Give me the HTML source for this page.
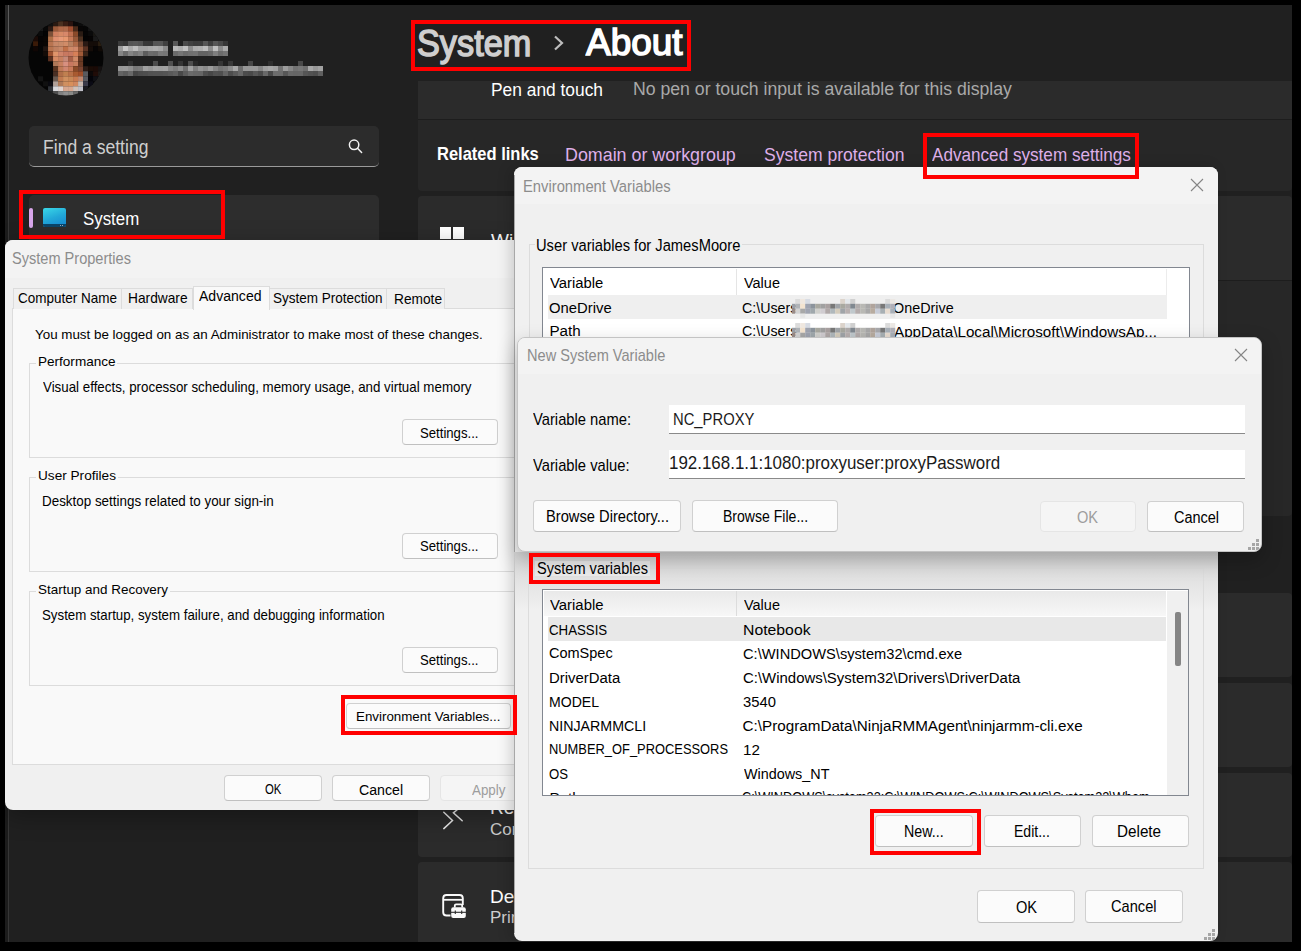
<!DOCTYPE html>
<html><head><meta charset="utf-8">
<style>
*{margin:0;padding:0;box-sizing:border-box}
html,body{width:1301px;height:951px;overflow:hidden;background:#000;font-family:"Liberation Sans",sans-serif}
.a{position:absolute}
.t{position:absolute;white-space:nowrap;line-height:1;transform-origin:0 0}
.clip{position:absolute;overflow:hidden}
</style></head><body>

<div class="a" style="left:5px;top:5px;width:1287px;height:937px;background:#202020"></div>
<div class="a" style="left:5px;top:5px;width:3px;height:937px;background:#1c1c1c"></div>
<div class="a" style="left:8px;top:5px;width:1px;height:937px;background:#363636"></div>
<div class="a" style="left:5px;top:5px;width:3px;height:35px;background:#262626"></div>
<div class="a" style="left:8px;top:5px;width:1px;height:35px;background:#5a5a5a"></div>
<div class="a" style="left:418px;top:81px;width:874px;height:38px;background:#2b2b2b"></div>
<div class="a" style="left:418px;top:119px;width:874px;height:1px;background:#1d1d1d"></div>
<div class="a" style="left:418px;top:120px;width:874px;height:71px;background:#272727;border-radius:0 0 4px 4px"></div>
<div class="a" style="left:418px;top:196px;width:874px;height:84px;background:#2b2b2b;border-radius:4px 4px 0 0"></div>
<div class="a" style="left:418px;top:280px;width:874px;height:1px;background:#1d1d1d"></div>
<div class="a" style="left:418px;top:281px;width:874px;height:235px;background:#272727;border-radius:0 0 4px 4px"></div>
<div class="a" style="left:418px;top:593px;width:874px;height:84px;background:#2b2b2b;border-radius:4px"></div>
<div class="a" style="left:418px;top:683px;width:874px;height:84px;background:#2b2b2b;border-radius:4px"></div>
<div class="a" style="left:418px;top:773px;width:874px;height:84px;background:#2b2b2b;border-radius:4px"></div>
<div class="a" style="left:418px;top:862px;width:874px;height:80px;background:#2b2b2b;border-radius:4px 4px 0 0"></div>
<svg class="a" style="left:23px;top:11px" width="85" height="92" viewBox="0 0 85 92"><defs><clipPath id="avc"><circle cx="43" cy="47" r="37.5"/></clipPath></defs><g clip-path="url(#avc)"><rect x="0" y="0" width="85" height="92" fill="#050505"/><rect x="25.05" y="10.26" width="5.05" height="5.05" fill="#111"/><rect x="30.05" y="10.26" width="5.05" height="5.05" fill="#2a1a12"/><rect x="35.05" y="10.26" width="5.05" height="5.05" fill="#4a3020"/><rect x="40.05" y="10.26" width="5.05" height="5.05" fill="#3a1e14"/><rect x="45.05" y="10.26" width="5.05" height="5.05" fill="#2a1410"/><rect x="50.05" y="10.26" width="5.05" height="5.05" fill="#0a0808"/><rect x="55.05" y="10.26" width="5.05" height="5.05" fill="#0c0c0c"/><rect x="60.05" y="10.26" width="5.05" height="5.05" fill="#1a1a1a"/><rect x="15.05" y="15.26" width="5.05" height="5.05" fill="#1a1a1a"/><rect x="20.05" y="15.26" width="5.05" height="5.05" fill="#080808"/><rect x="25.05" y="15.26" width="5.05" height="5.05" fill="#2a1a14"/><rect x="30.05" y="15.26" width="5.05" height="5.05" fill="#9a5a3a"/><rect x="35.05" y="15.26" width="5.05" height="5.05" fill="#b06848"/><rect x="40.05" y="15.26" width="5.05" height="5.05" fill="#b06a4a"/><rect x="45.05" y="15.26" width="5.05" height="5.05" fill="#a04e30"/><rect x="50.05" y="15.26" width="5.05" height="5.05" fill="#4a2a1a"/><rect x="55.05" y="15.26" width="5.05" height="5.05" fill="#080606"/><rect x="60.05" y="15.26" width="5.05" height="5.05" fill="#060606"/><rect x="65.05" y="15.26" width="5.05" height="5.05" fill="#141414"/><rect x="15.05" y="20.26" width="5.05" height="5.05" fill="#0a0a0a"/><rect x="20.05" y="20.26" width="5.05" height="5.05" fill="#040404"/><rect x="25.05" y="20.26" width="5.05" height="5.05" fill="#7a5038"/><rect x="30.05" y="20.26" width="5.05" height="5.05" fill="#d08060"/><rect x="35.05" y="20.26" width="5.05" height="5.05" fill="#d88a66"/><rect x="40.05" y="20.26" width="5.05" height="5.05" fill="#d8886a"/><rect x="45.05" y="20.26" width="5.05" height="5.05" fill="#c07050"/><rect x="50.05" y="20.26" width="5.05" height="5.05" fill="#8a4a2a"/><rect x="55.05" y="20.26" width="5.05" height="5.05" fill="#2a1c14"/><rect x="60.05" y="20.26" width="5.05" height="5.05" fill="#050505"/><rect x="65.05" y="20.26" width="5.05" height="5.05" fill="#0a0a0a"/><rect x="70.05" y="20.26" width="5.05" height="5.05" fill="#1a1814"/><rect x="10.05" y="25.26" width="5.05" height="5.05" fill="#1a0a06"/><rect x="15.05" y="25.26" width="5.05" height="5.05" fill="#060404"/><rect x="20.05" y="25.26" width="5.05" height="5.05" fill="#0a0604"/><rect x="25.05" y="25.26" width="5.05" height="5.05" fill="#b07048"/><rect x="30.05" y="25.26" width="5.05" height="5.05" fill="#e09070"/><rect x="35.05" y="25.26" width="5.05" height="5.05" fill="#e89a78"/><rect x="40.05" y="25.26" width="5.05" height="5.05" fill="#e89870"/><rect x="45.05" y="25.26" width="5.05" height="5.05" fill="#c87a58"/><rect x="50.05" y="25.26" width="5.05" height="5.05" fill="#9a5a3a"/><rect x="55.05" y="25.26" width="5.05" height="5.05" fill="#4a3020"/><rect x="60.05" y="25.26" width="5.05" height="5.05" fill="#040404"/><rect x="65.05" y="25.26" width="5.05" height="5.05" fill="#060404"/><rect x="70.05" y="25.26" width="5.05" height="5.05" fill="#1a1a1a"/><rect x="10.05" y="30.26" width="5.05" height="5.05" fill="#3a1a08"/><rect x="15.05" y="30.26" width="5.05" height="5.05" fill="#080404"/><rect x="20.05" y="30.26" width="5.05" height="5.05" fill="#0a0604"/><rect x="25.05" y="30.26" width="5.05" height="5.05" fill="#b87450"/><rect x="30.05" y="30.26" width="5.05" height="5.05" fill="#c88868"/><rect x="35.05" y="30.26" width="5.05" height="5.05" fill="#c88a68"/><rect x="40.05" y="30.26" width="5.05" height="5.05" fill="#d08c68"/><rect x="45.05" y="30.26" width="5.05" height="5.05" fill="#b88060"/><rect x="50.05" y="30.26" width="5.05" height="5.05" fill="#b06a48"/><rect x="55.05" y="30.26" width="5.05" height="5.05" fill="#7a4a32"/><rect x="60.05" y="30.26" width="5.05" height="5.05" fill="#2a1a14"/><rect x="65.05" y="30.26" width="5.05" height="5.05" fill="#140c08"/><rect x="70.05" y="30.26" width="5.05" height="5.05" fill="#140c08"/><rect x="75.05" y="30.26" width="5.05" height="5.05" fill="#2a1e10"/><rect x="10.05" y="35.26" width="5.05" height="5.05" fill="#100604"/><rect x="20.05" y="35.26" width="5.05" height="5.05" fill="#201410"/><rect x="25.05" y="35.26" width="5.05" height="5.05" fill="#b87450"/><rect x="30.05" y="35.26" width="5.05" height="5.05" fill="#c08060"/><rect x="35.05" y="35.26" width="5.05" height="5.05" fill="#c88868"/><rect x="40.05" y="35.26" width="5.05" height="5.05" fill="#c07048"/><rect x="45.05" y="35.26" width="5.05" height="5.05" fill="#d08a68"/><rect x="50.05" y="35.26" width="5.05" height="5.05" fill="#d0886a"/><rect x="55.05" y="35.26" width="5.05" height="5.05" fill="#9a5a3a"/><rect x="60.05" y="35.26" width="5.05" height="5.05" fill="#5a3222"/><rect x="65.05" y="35.26" width="5.05" height="5.05" fill="#140c08"/><rect x="70.05" y="35.26" width="5.05" height="5.05" fill="#060404"/><rect x="75.05" y="35.26" width="5.05" height="5.05" fill="#100a06"/><rect x="20.05" y="40.26" width="5.05" height="5.05" fill="#140c08"/><rect x="25.05" y="40.26" width="5.05" height="5.05" fill="#9a5030"/><rect x="30.05" y="40.26" width="5.05" height="5.05" fill="#e0946a"/><rect x="35.05" y="40.26" width="5.05" height="5.05" fill="#d0846a"/><rect x="40.05" y="40.26" width="5.05" height="5.05" fill="#c87860"/><rect x="45.05" y="40.26" width="5.05" height="5.05" fill="#c87860"/><rect x="50.05" y="40.26" width="5.05" height="5.05" fill="#d88058"/><rect x="55.05" y="40.26" width="5.05" height="5.05" fill="#a05a38"/><rect x="60.05" y="40.26" width="5.05" height="5.05" fill="#3a2418"/><rect x="25.05" y="45.26" width="5.05" height="5.05" fill="#5a3020"/><rect x="30.05" y="45.26" width="5.05" height="5.05" fill="#d88a64"/><rect x="35.05" y="45.26" width="5.05" height="5.05" fill="#c88060"/><rect x="40.05" y="45.26" width="5.05" height="5.05" fill="#c88a78"/><rect x="45.05" y="45.26" width="5.05" height="5.05" fill="#a86048"/><rect x="50.05" y="45.26" width="5.05" height="5.05" fill="#d08a68"/><rect x="55.05" y="45.26" width="5.05" height="5.05" fill="#6a3a24"/><rect x="30.05" y="50.26" width="5.05" height="5.05" fill="#b07858"/><rect x="35.05" y="50.26" width="5.05" height="5.05" fill="#c88060"/><rect x="40.05" y="50.26" width="5.05" height="5.05" fill="#d89080"/><rect x="45.05" y="50.26" width="5.05" height="5.05" fill="#c87860"/><rect x="50.05" y="50.26" width="5.05" height="5.05" fill="#c88060"/><rect x="55.05" y="50.26" width="5.05" height="5.05" fill="#6a3a24"/><rect x="30.05" y="55.26" width="5.05" height="5.05" fill="#5a3420"/><rect x="35.05" y="55.26" width="5.05" height="5.05" fill="#c07a58"/><rect x="40.05" y="55.26" width="5.05" height="5.05" fill="#d08670"/><rect x="45.05" y="55.26" width="5.05" height="5.05" fill="#c87a5a"/><rect x="50.05" y="55.26" width="5.05" height="5.05" fill="#8a4a28"/><rect x="55.05" y="55.26" width="5.05" height="5.05" fill="#7a4430"/><rect x="60.05" y="55.26" width="5.05" height="5.05" fill="#2a1a14"/><rect x="65.05" y="55.26" width="5.05" height="5.05" fill="#1a0c06"/><rect x="70.05" y="55.26" width="5.05" height="5.05" fill="#1a0a06"/><rect x="75.05" y="55.26" width="5.05" height="5.05" fill="#141010"/><rect x="30.05" y="60.26" width="5.05" height="5.05" fill="#4a3024"/><rect x="35.05" y="60.26" width="5.05" height="5.05" fill="#b06e48"/><rect x="40.05" y="60.26" width="5.05" height="5.05" fill="#c08050"/><rect x="45.05" y="60.26" width="5.05" height="5.05" fill="#b87048"/><rect x="50.05" y="60.26" width="5.05" height="5.05" fill="#a85a30"/><rect x="55.05" y="60.26" width="5.05" height="5.05" fill="#a04e2a"/><rect x="60.05" y="60.26" width="5.05" height="5.05" fill="#5a5a5e"/><rect x="65.05" y="60.26" width="5.05" height="5.05" fill="#0c0808"/><rect x="70.05" y="60.26" width="5.05" height="5.05" fill="#200c08"/><rect x="75.05" y="60.26" width="5.05" height="5.05" fill="#1e1a18"/><rect x="15.05" y="65.26" width="5.05" height="5.05" fill="#141414"/><rect x="30.05" y="65.26" width="5.05" height="5.05" fill="#6a5a50"/><rect x="35.05" y="65.26" width="5.05" height="5.05" fill="#c07a50"/><rect x="40.05" y="65.26" width="5.05" height="5.05" fill="#d09060"/><rect x="45.05" y="65.26" width="5.05" height="5.05" fill="#c88858"/><rect x="50.05" y="65.26" width="5.05" height="5.05" fill="#c87a50"/><rect x="55.05" y="65.26" width="5.05" height="5.05" fill="#c08870"/><rect x="60.05" y="65.26" width="5.05" height="5.05" fill="#5a5a60"/><rect x="65.05" y="65.26" width="5.05" height="5.05" fill="#04040a"/><rect x="70.05" y="65.26" width="5.05" height="5.05" fill="#101014"/><rect x="20.05" y="70.26" width="5.05" height="5.05" fill="#101010"/><rect x="25.05" y="70.26" width="5.05" height="5.05" fill="#0a0a10"/><rect x="30.05" y="70.26" width="5.05" height="5.05" fill="#b0a098"/><rect x="35.05" y="70.26" width="5.05" height="5.05" fill="#b07a58"/><rect x="40.05" y="70.26" width="5.05" height="5.05" fill="#d09060"/><rect x="45.05" y="70.26" width="5.05" height="5.05" fill="#d8905c"/><rect x="50.05" y="70.26" width="5.05" height="5.05" fill="#d08860"/><rect x="55.05" y="70.26" width="5.05" height="5.05" fill="#c8b8b0"/><rect x="60.05" y="70.26" width="5.05" height="5.05" fill="#3a3a4a"/><rect x="65.05" y="70.26" width="5.05" height="5.05" fill="#0a0a14"/><rect x="25.05" y="75.26" width="5.05" height="5.05" fill="#303338"/><rect x="30.05" y="75.26" width="5.05" height="5.05" fill="#d8d8dc"/><rect x="35.05" y="75.26" width="5.05" height="5.05" fill="#e0d4d0"/><rect x="40.05" y="75.26" width="5.05" height="5.05" fill="#d8a890"/><rect x="45.05" y="75.26" width="5.05" height="5.05" fill="#d8a890"/><rect x="50.05" y="75.26" width="5.05" height="5.05" fill="#d0c0b8"/><rect x="55.05" y="75.26" width="5.05" height="5.05" fill="#c0c0c8"/><rect x="60.05" y="75.26" width="5.05" height="5.05" fill="#1a1a20"/><rect x="25.05" y="80.26" width="5.05" height="5.05" fill="#2a2a2a"/><rect x="30.05" y="80.26" width="5.05" height="5.05" fill="#505050"/><rect x="35.05" y="80.26" width="5.05" height="5.05" fill="#808080"/><rect x="40.05" y="80.26" width="5.05" height="5.05" fill="#909090"/><rect x="45.05" y="80.26" width="5.05" height="5.05" fill="#8a8a88"/><rect x="50.05" y="80.26" width="5.05" height="5.05" fill="#6a6a6a"/><rect x="55.05" y="80.26" width="5.05" height="5.05" fill="#303030"/></g></svg>
<svg class="a" style="left:118px;top:41px" width="111" height="16"><rect x="0" y="0" width="5" height="5" fill="rgb(59,59,59)"/><rect x="5" y="0" width="5" height="5" fill="rgb(53,53,53)"/><rect x="10" y="0" width="5" height="5" fill="rgb(84,84,84)"/><rect x="15" y="0" width="5" height="5" fill="rgb(87,87,87)"/><rect x="20" y="0" width="5" height="5" fill="rgb(82,82,82)"/><rect x="25" y="0" width="5" height="5" fill="rgb(55,55,55)"/><rect x="30" y="0" width="5" height="5" fill="rgb(54,54,54)"/><rect x="35" y="0" width="5" height="5" fill="rgb(85,85,85)"/><rect x="40" y="0" width="5" height="5" fill="rgb(86,86,86)"/><rect x="45" y="0" width="5" height="5" fill="rgb(64,64,64)"/><rect x="55" y="0" width="5" height="5" fill="rgb(87,87,87)"/><rect x="65" y="0" width="5" height="5" fill="rgb(75,75,75)"/><rect x="70" y="0" width="5" height="5" fill="rgb(64,64,64)"/><rect x="75" y="0" width="5" height="5" fill="rgb(58,58,58)"/><rect x="80" y="0" width="5" height="5" fill="rgb(59,59,59)"/><rect x="85" y="0" width="5" height="5" fill="rgb(86,86,86)"/><rect x="90" y="0" width="5" height="5" fill="rgb(61,61,61)"/><rect x="95" y="0" width="5" height="5" fill="rgb(86,86,86)"/><rect x="100" y="0" width="5" height="5" fill="rgb(73,73,73)"/><rect x="105" y="0" width="5" height="5" fill="rgb(54,54,54)"/><rect x="0" y="5" width="5" height="5" fill="rgb(156,156,156)"/><rect x="5" y="5" width="5" height="5" fill="rgb(198,198,198)"/><rect x="10" y="5" width="5" height="5" fill="rgb(170,170,170)"/><rect x="15" y="5" width="5" height="5" fill="rgb(188,188,188)"/><rect x="20" y="5" width="5" height="5" fill="rgb(161,161,161)"/><rect x="25" y="5" width="5" height="5" fill="rgb(161,161,161)"/><rect x="30" y="5" width="5" height="5" fill="rgb(168,168,168)"/><rect x="35" y="5" width="5" height="5" fill="rgb(173,173,173)"/><rect x="40" y="5" width="5" height="5" fill="rgb(166,166,166)"/><rect x="45" y="5" width="5" height="5" fill="rgb(139,139,139)"/><rect x="55" y="5" width="5" height="5" fill="rgb(183,183,183)"/><rect x="60" y="5" width="5" height="5" fill="rgb(173,173,173)"/><rect x="65" y="5" width="5" height="5" fill="rgb(192,192,192)"/><rect x="70" y="5" width="5" height="5" fill="rgb(139,139,139)"/><rect x="75" y="5" width="5" height="5" fill="rgb(170,170,170)"/><rect x="80" y="5" width="5" height="5" fill="rgb(174,174,174)"/><rect x="85" y="5" width="5" height="5" fill="rgb(188,188,188)"/><rect x="90" y="5" width="5" height="5" fill="rgb(141,141,141)"/><rect x="95" y="5" width="5" height="5" fill="rgb(190,190,190)"/><rect x="100" y="5" width="5" height="5" fill="rgb(138,138,138)"/><rect x="105" y="5" width="5" height="5" fill="rgb(169,169,169)"/><rect x="0" y="10" width="5" height="5" fill="rgb(133,133,133)"/><rect x="5" y="10" width="5" height="5" fill="rgb(108,108,108)"/><rect x="10" y="10" width="5" height="5" fill="rgb(132,132,132)"/><rect x="15" y="10" width="5" height="5" fill="rgb(119,119,119)"/><rect x="20" y="10" width="5" height="5" fill="rgb(129,129,129)"/><rect x="25" y="10" width="5" height="5" fill="rgb(93,93,93)"/><rect x="30" y="10" width="5" height="5" fill="rgb(108,108,108)"/><rect x="35" y="10" width="5" height="5" fill="rgb(105,105,105)"/><rect x="40" y="10" width="5" height="5" fill="rgb(121,121,121)"/><rect x="45" y="10" width="5" height="5" fill="rgb(118,118,118)"/><rect x="55" y="10" width="5" height="5" fill="rgb(107,107,107)"/><rect x="60" y="10" width="5" height="5" fill="rgb(117,117,117)"/><rect x="65" y="10" width="5" height="5" fill="rgb(107,107,107)"/><rect x="70" y="10" width="5" height="5" fill="rgb(112,112,112)"/><rect x="75" y="10" width="5" height="5" fill="rgb(114,114,114)"/><rect x="80" y="10" width="5" height="5" fill="rgb(99,99,99)"/><rect x="85" y="10" width="5" height="5" fill="rgb(99,99,99)"/><rect x="90" y="10" width="5" height="5" fill="rgb(104,104,104)"/><rect x="95" y="10" width="5" height="5" fill="rgb(127,127,127)"/><rect x="100" y="10" width="5" height="5" fill="rgb(108,108,108)"/><rect x="105" y="10" width="5" height="5" fill="rgb(116,116,116)"/></svg>
<svg class="a" style="left:118px;top:61px" width="206" height="16"><rect x="10" y="0" width="5" height="5" fill="rgb(48,48,48)"/><rect x="35" y="0" width="5" height="5" fill="rgb(75,75,75)"/><rect x="50" y="0" width="5" height="5" fill="rgb(80,80,80)"/><rect x="60" y="0" width="5" height="5" fill="rgb(53,53,53)"/><rect x="70" y="0" width="5" height="5" fill="rgb(78,78,78)"/><rect x="75" y="0" width="5" height="5" fill="rgb(40,40,40)"/><rect x="100" y="0" width="5" height="5" fill="rgb(53,53,53)"/><rect x="110" y="0" width="5" height="5" fill="rgb(56,56,56)"/><rect x="130" y="0" width="5" height="5" fill="rgb(71,71,71)"/><rect x="150" y="0" width="5" height="5" fill="rgb(46,46,46)"/><rect x="180" y="0" width="5" height="5" fill="rgb(73,73,73)"/><rect x="0" y="5" width="5" height="5" fill="rgb(151,151,151)"/><rect x="5" y="5" width="5" height="5" fill="rgb(154,154,154)"/><rect x="10" y="5" width="5" height="5" fill="rgb(143,143,143)"/><rect x="15" y="5" width="5" height="5" fill="rgb(120,120,120)"/><rect x="20" y="5" width="5" height="5" fill="rgb(124,124,124)"/><rect x="25" y="5" width="5" height="5" fill="rgb(159,159,159)"/><rect x="30" y="5" width="5" height="5" fill="rgb(150,150,150)"/><rect x="35" y="5" width="5" height="5" fill="rgb(161,161,161)"/><rect x="40" y="5" width="5" height="5" fill="rgb(158,158,158)"/><rect x="45" y="5" width="5" height="5" fill="rgb(161,161,161)"/><rect x="50" y="5" width="5" height="5" fill="rgb(135,135,135)"/><rect x="55" y="5" width="5" height="5" fill="rgb(124,124,124)"/><rect x="60" y="5" width="5" height="5" fill="rgb(141,141,141)"/><rect x="65" y="5" width="5" height="5" fill="rgb(111,111,111)"/><rect x="70" y="5" width="5" height="5" fill="rgb(160,160,160)"/><rect x="75" y="5" width="5" height="5" fill="rgb(126,126,126)"/><rect x="80" y="5" width="5" height="5" fill="rgb(148,148,148)"/><rect x="85" y="5" width="5" height="5" fill="rgb(138,138,138)"/><rect x="90" y="5" width="5" height="5" fill="rgb(156,156,156)"/><rect x="95" y="5" width="5" height="5" fill="rgb(133,133,133)"/><rect x="100" y="5" width="5" height="5" fill="rgb(116,116,116)"/><rect x="105" y="5" width="5" height="5" fill="rgb(122,122,122)"/><rect x="110" y="5" width="5" height="5" fill="rgb(140,140,140)"/><rect x="115" y="5" width="5" height="5" fill="rgb(167,167,167)"/><rect x="120" y="5" width="5" height="5" fill="rgb(110,110,110)"/><rect x="125" y="5" width="5" height="5" fill="rgb(151,151,151)"/><rect x="130" y="5" width="5" height="5" fill="rgb(151,151,151)"/><rect x="135" y="5" width="5" height="5" fill="rgb(152,152,152)"/><rect x="140" y="5" width="5" height="5" fill="rgb(134,134,134)"/><rect x="145" y="5" width="5" height="5" fill="rgb(158,158,158)"/><rect x="150" y="5" width="5" height="5" fill="rgb(166,166,166)"/><rect x="155" y="5" width="5" height="5" fill="rgb(160,160,160)"/><rect x="160" y="5" width="5" height="5" fill="rgb(115,115,115)"/><rect x="165" y="5" width="5" height="5" fill="rgb(156,156,156)"/><rect x="170" y="5" width="5" height="5" fill="rgb(135,135,135)"/><rect x="175" y="5" width="5" height="5" fill="rgb(115,115,115)"/><rect x="180" y="5" width="5" height="5" fill="rgb(120,120,120)"/><rect x="185" y="5" width="5" height="5" fill="rgb(111,111,111)"/><rect x="190" y="5" width="5" height="5" fill="rgb(167,167,167)"/><rect x="195" y="5" width="5" height="5" fill="rgb(151,151,151)"/><rect x="200" y="5" width="5" height="5" fill="rgb(162,162,162)"/><rect x="0" y="10" width="5" height="5" fill="rgb(100,100,100)"/><rect x="5" y="10" width="5" height="5" fill="rgb(92,92,92)"/><rect x="10" y="10" width="5" height="5" fill="rgb(105,105,105)"/><rect x="15" y="10" width="5" height="5" fill="rgb(70,70,70)"/><rect x="20" y="10" width="5" height="5" fill="rgb(76,76,76)"/><rect x="25" y="10" width="5" height="5" fill="rgb(78,78,78)"/><rect x="30" y="10" width="5" height="5" fill="rgb(82,82,82)"/><rect x="35" y="10" width="5" height="5" fill="rgb(83,83,83)"/><rect x="40" y="10" width="5" height="5" fill="rgb(83,83,83)"/><rect x="45" y="10" width="5" height="5" fill="rgb(85,85,85)"/><rect x="50" y="10" width="5" height="5" fill="rgb(90,90,90)"/><rect x="55" y="10" width="5" height="5" fill="rgb(96,96,96)"/><rect x="60" y="10" width="5" height="5" fill="rgb(73,73,73)"/><rect x="65" y="10" width="5" height="5" fill="rgb(92,92,92)"/><rect x="70" y="10" width="5" height="5" fill="rgb(107,107,107)"/><rect x="75" y="10" width="5" height="5" fill="rgb(103,103,103)"/><rect x="80" y="10" width="5" height="5" fill="rgb(102,102,102)"/><rect x="85" y="10" width="5" height="5" fill="rgb(79,79,79)"/><rect x="90" y="10" width="5" height="5" fill="rgb(71,71,71)"/><rect x="95" y="10" width="5" height="5" fill="rgb(81,81,81)"/><rect x="100" y="10" width="5" height="5" fill="rgb(79,79,79)"/><rect x="105" y="10" width="5" height="5" fill="rgb(100,100,100)"/><rect x="110" y="10" width="5" height="5" fill="rgb(77,77,77)"/><rect x="115" y="10" width="5" height="5" fill="rgb(90,90,90)"/><rect x="120" y="10" width="5" height="5" fill="rgb(103,103,103)"/><rect x="125" y="10" width="5" height="5" fill="rgb(76,76,76)"/><rect x="130" y="10" width="5" height="5" fill="rgb(73,73,73)"/><rect x="135" y="10" width="5" height="5" fill="rgb(87,87,87)"/><rect x="140" y="10" width="5" height="5" fill="rgb(76,76,76)"/><rect x="145" y="10" width="5" height="5" fill="rgb(105,105,105)"/><rect x="150" y="10" width="5" height="5" fill="rgb(74,74,74)"/><rect x="155" y="10" width="5" height="5" fill="rgb(109,109,109)"/><rect x="160" y="10" width="5" height="5" fill="rgb(108,108,108)"/><rect x="165" y="10" width="5" height="5" fill="rgb(87,87,87)"/><rect x="170" y="10" width="5" height="5" fill="rgb(104,104,104)"/><rect x="175" y="10" width="5" height="5" fill="rgb(102,102,102)"/><rect x="180" y="10" width="5" height="5" fill="rgb(103,103,103)"/><rect x="185" y="10" width="5" height="5" fill="rgb(86,86,86)"/><rect x="190" y="10" width="5" height="5" fill="rgb(82,82,82)"/><rect x="195" y="10" width="5" height="5" fill="rgb(78,78,78)"/><rect x="200" y="10" width="5" height="5" fill="rgb(95,95,95)"/></svg>
<div class="a" style="left:29px;top:126px;width:350px;height:41px;background:#2c2c2c;border-radius:5px;border-bottom:1px solid #9a9a9a"></div>
<div class="t" style="left:42.62px;top:137.51px;font-size:19.86px;color:#cfcfcf;transform:scaleX(0.8842);">Find a setting</div>
<svg class="a" style="left:346px;top:138px" width="18" height="18" viewBox="0 0 18 18"><circle cx="8.1" cy="6.8" r="4.7" fill="none" stroke="#f2f2f2" stroke-width="1.5"/><path d="M11.5 10.2 L15.6 14.5" stroke="#f2f2f2" stroke-width="1.5" stroke-linecap="round"/></svg>
<div class="a" style="left:29px;top:195px;width:350px;height:50px;background:#2d2d2d;border-radius:5px"></div>
<div class="a" style="left:29px;top:208px;width:4px;height:20px;background:#d8a6ea;border-radius:2px"></div>
<div class="a" style="left:43px;top:208px;width:23px;height:19px;border-radius:2px;background:linear-gradient(160deg,#3ad8e8,#22a8d8 50%,#1484d0)"></div>
<div class="a" style="left:43px;top:224px;width:23px;height:3px;background:#0b4468;border-radius:0 0 2px 2px"></div>
<div class="a" style="left:59.5px;top:225px;width:1.3px;height:1.3px;background:#9ab"></div>
<div class="a" style="left:61.6px;top:225px;width:1.3px;height:1.3px;background:#9ab"></div>
<div class="t" style="left:82.88px;top:209.45px;font-size:18.99px;color:#ffffff;transform:scaleX(0.8880);">System</div>
<div class="t" style="left:417.00px;top:24.56px;font-size:37.39px;color:#cfcfcf;transform:scaleX(0.9172);-webkit-text-stroke:1.5px #cfcfcf;">System</div>
<svg class="a" style="left:551px;top:34px" width="16" height="18" viewBox="0 0 16 18"><path d="M4 2.5 L11 9 L4 15.5" fill="none" stroke="#bdbdbd" stroke-width="2.2"/></svg>
<div class="t" style="left:585.70px;top:24.15px;font-size:37.54px;color:#ffffff;transform:scaleX(0.9845);-webkit-text-stroke:1.5px #fff;">About</div>
<div class="t" style="left:490.50px;top:81.06px;font-size:18.12px;color:#ffffff;transform:scaleX(0.9588);">Pen and touch</div>
<div class="t" style="left:633.00px;top:80.48px;font-size:18.12px;color:#a9a9a9;transform:scaleX(0.9751);">No pen or touch input is available for this display</div>
<div class="t" style="left:437.00px;top:144.90px;font-size:18.55px;color:#ffffff;font-weight:bold;transform:scaleX(0.8898);">Related links</div>
<div class="t" style="left:565.44px;top:145.52px;font-size:18.84px;color:#dfb0ea;transform:scaleX(0.9488);">Domain or workgroup</div>
<div class="t" style="left:763.50px;top:145.52px;font-size:18.84px;color:#dfb0ea;transform:scaleX(0.9322);">System protection</div>
<div class="t" style="left:932.12px;top:145.52px;font-size:18.84px;color:#dfb0ea;transform:scaleX(0.9094);">Advanced system settings</div>
<div class="a" style="left:440px;top:227px;width:11px;height:12px;background:#fff"></div>
<div class="a" style="left:453px;top:227px;width:11px;height:12px;background:#fff"></div>
<div class="t" style="left:491.00px;top:231.24px;font-size:19.00px;color:#fff;transform:scaleX(1.0000);">Windows specifications</div>
<svg class="a" style="left:435px;top:800px" width="35" height="40" viewBox="435 800 35 40"><path d="M443.8 812.2 L452.5 820.5 L443.8 828.6 M457.5 809.5 L453.4 812.8 L462.2 820.8" fill="none" stroke="#e6e6e6" stroke-width="1.5" stroke-linecap="round" stroke-linejoin="miter"/></svg>
<div class="t" style="left:490.00px;top:798.44px;font-size:19.00px;color:#fff;transform:scaleX(1.0000);">Remote desktop</div>
<div class="t" style="left:490.00px;top:820.73px;font-size:17.00px;color:#cfcfcf;transform:scaleX(1.0000);">Control this device</div>
<svg class="a" style="left:435px;top:885px" width="40" height="40" viewBox="435 885 40 40"><path d="M450.5 915.5 H446.5 Q443.2 915.5 443.2 912.2 V898.3 Q443.2 895 446.5 895 H459.5 Q462.8 895 462.8 898.3 V905" fill="none" stroke="#fafafa" stroke-width="1.9"/><path d="M443.5 899.8 H462.5" stroke="#fafafa" stroke-width="1.8"/><rect x="451.2" y="907.2" width="14.6" height="10.8" rx="2" fill="#fafafa"/><path d="M454.8 907.5 V905.6 Q454.8 904.3 456.1 904.3 H460.9 Q462.2 904.3 462.2 905.6 V907.5" fill="none" stroke="#fafafa" stroke-width="1.8"/><path d="M451 912.3 H466" stroke="#2b2b2b" stroke-width="1.1"/><path d="M455.3 910.6 V914 M461.7 910.6 V914" stroke="#2b2b2b" stroke-width="1.1"/></svg>
<div class="t" style="left:490.00px;top:886.81px;font-size:19.00px;color:#fff;transform:scaleX(1.0000);">Device Manager</div>
<div class="t" style="left:490.00px;top:908.59px;font-size:17.00px;color:#cfcfcf;transform:scaleX(1.0000);">Printer and other drivers</div>
<div class="clip" style="left:5px;top:240px;width:509px;height:570px;border-radius:8px 0 0 8px;background:#f0f0f0;box-shadow:0 6px 24px rgba(0,0,0,.3)">
<div class="a" style="left:-5px;top:-240px;width:1301px;height:951px">
<div class="a" style="left:5px;top:240px;width:515px;height:38px;background:#f3f3f3"></div>
<div class="t" style="left:12.00px;top:251.24px;font-size:15.94px;color:#8c8c8c;transform:scaleX(0.9137);">System Properties</div>
<div class="a" style="left:11.5px;top:308px;width:518.5px;height:457px;background:#f9f9f9;border:1px solid #dcdcdc"></div>
<div class="a" style="left:13px;top:287.5px;width:109px;height:21.5px;background:#f0f0f0;border:1px solid #dcdcdc;border-bottom:none"></div>
<div class="a" style="left:122px;top:287.5px;width:71px;height:21.5px;background:#f0f0f0;border:1px solid #dcdcdc;border-bottom:none;border-left:none"></div>
<div class="a" style="left:269px;top:287.5px;width:118px;height:21.5px;background:#f0f0f0;border:1px solid #dcdcdc;border-bottom:none;border-left:none"></div>
<div class="a" style="left:387px;top:287.5px;width:58px;height:21.5px;background:#f0f0f0;border:1px solid #dcdcdc;border-bottom:none;border-left:none"></div>
<div class="a" style="left:193px;top:285.5px;width:77px;height:24.5px;background:#f9f9f9;border:1px solid #dcdcdc;border-bottom:none"></div>
<div class="t" style="left:17.88px;top:290.75px;font-size:14.20px;color:#000;transform:scaleX(0.9500);">Computer Name</div>
<div class="t" style="left:128.00px;top:291.43px;font-size:14.20px;color:#000;transform:scaleX(0.9682);">Hardware</div>
<div class="t" style="left:199.44px;top:289.27px;font-size:14.49px;color:#000;transform:scaleX(0.9703);">Advanced</div>
<div class="t" style="left:273.00px;top:291.26px;font-size:14.20px;color:#000;transform:scaleX(0.9520);">System Protection</div>
<div class="t" style="left:393.62px;top:291.52px;font-size:14.20px;color:#000;transform:scaleX(0.9676);">Remote</div>
<div class="t" style="left:34.50px;top:327.54px;font-size:13.48px;color:#000;transform:scaleX(0.9927);">You must be logged on as an Administrator to make most of these changes.</div>
<div class="a" style="left:29.4px;top:362.5px;width:510.6px;height:95.5px;border:1px solid #dcdcdc"></div>
<div class="a" style="left:36px;top:355.5px;width:81.4px;height:14px;background:#f9f9f9"></div>
<div class="t" style="left:37.56px;top:355.36px;font-size:13.19px;color:#000;transform:scaleX(1.0271);">Performance</div>
<div class="t" style="left:43.12px;top:379.86px;font-size:14.78px;color:#000;transform:scaleX(0.9028);">Visual effects, processor scheduling, memory usage, and virtual memory</div>
<div class="a" style="left:402px;top:419.4px;width:96px;height:25.5px;background:#fbfbfb;border:1px solid #d0d0d0;border-bottom-color:#c0c0c0;border-radius:4px"></div>
<div class="t" style="left:420.12px;top:426.55px;font-size:13.77px;color:#000;transform:scaleX(0.9551);">Settings...</div>
<div class="a" style="left:29.4px;top:476.5px;width:510.6px;height:95.5px;border:1px solid #dcdcdc"></div>
<div class="a" style="left:36px;top:469.5px;width:81.5px;height:14px;background:#f9f9f9"></div>
<div class="t" style="left:37.56px;top:469.36px;font-size:13.19px;color:#000;transform:scaleX(1.0327);">User Profiles</div>
<div class="t" style="left:42.12px;top:493.97px;font-size:14.64px;color:#000;transform:scaleX(0.9166);">Desktop settings related to your sign-in</div>
<div class="a" style="left:402px;top:533px;width:96px;height:25.5px;background:#fbfbfb;border:1px solid #d0d0d0;border-bottom-color:#c0c0c0;border-radius:4px"></div>
<div class="t" style="left:420.12px;top:539.99px;font-size:13.77px;color:#000;transform:scaleX(0.9551);">Settings...</div>
<div class="a" style="left:29.4px;top:590.5px;width:510.6px;height:95.7px;border:1px solid #dcdcdc"></div>
<div class="a" style="left:36px;top:583.5px;width:134.4px;height:14px;background:#f9f9f9"></div>
<div class="t" style="left:37.56px;top:583.34px;font-size:13.19px;color:#000;transform:scaleX(1.0194);">Startup and Recovery</div>
<div class="t" style="left:42.12px;top:608.30px;font-size:14.78px;color:#000;transform:scaleX(0.8997);">System startup, system failure, and debugging information</div>
<div class="a" style="left:402px;top:647px;width:96px;height:25.5px;background:#fbfbfb;border:1px solid #d0d0d0;border-bottom-color:#c0c0c0;border-radius:4px"></div>
<div class="t" style="left:420.12px;top:653.99px;font-size:13.77px;color:#000;transform:scaleX(0.9551);">Settings...</div>
<div class="a" style="left:346.3px;top:703.3px;width:165px;height:25.3px;background:#fbfbfb;border:1px solid #d0d0d0;border-bottom-color:#c0c0c0;border-radius:4px"></div>
<div class="t" style="left:355.50px;top:710.26px;font-size:13.62px;color:#000;transform:scaleX(0.9806);">Environment Variables...</div>
<div class="a" style="left:224px;top:775px;width:98px;height:26px;background:#fbfbfb;border:1px solid #d0d0d0;border-bottom-color:#c0c0c0;border-radius:4px"></div>
<div class="t" style="left:265.12px;top:783.10px;font-size:13.77px;color:#000;transform:scaleX(0.8257);">OK</div>
<div class="a" style="left:332px;top:775px;width:98px;height:26px;background:#fbfbfb;border:1px solid #d0d0d0;border-bottom-color:#c0c0c0;border-radius:4px"></div>
<div class="t" style="left:359.00px;top:783.65px;font-size:13.77px;color:#000;transform:scaleX(1.0283);">Cancel</div>
<div class="a" style="left:440px;top:775px;width:100px;height:26px;background:#f5f5f5;border:1px solid #e5e5e5;border-bottom-color:#e5e5e5;border-radius:4px"></div>
<div class="t" style="left:471.62px;top:783.61px;font-size:13.77px;color:#9d9d9d;transform:scaleX(0.9708);">Apply</div>
</div></div>
<div class="clip" style="left:514px;top:167px;width:704px;height:774px;border-radius:8px;background:#f0f0f0;box-shadow:-4px 0 14px rgba(0,0,0,.16)">
<div class="a" style="left:-514px;top:-167px;width:1301px;height:951px">
<div class="a" style="left:514px;top:167px;width:704px;height:37px;background:#f3f3f3"></div>
<div class="a" style="left:514px;top:175px;width:1px;height:758px;background:#a8a8a8"></div>
<div class="t" style="left:522.62px;top:177.71px;font-size:16.09px;color:#8c8c8c;transform:scaleX(0.9188);">Environment Variables</div>
<svg class="a" style="left:1190px;top:178px" width="14" height="14" viewBox="0 0 14 14"><path d="M1 1 L13 13 M13 1 L1 13" stroke="#858585" stroke-width="1.1"/></svg>
<div class="a" style="left:528.5px;top:244.4px;width:675.5px;height:295.6px;border:1px solid #dcdcdc"></div>
<div class="a" style="left:535px;top:238px;width:207px;height:13px;background:#f0f0f0"></div>
<div class="t" style="left:536.44px;top:236.89px;font-size:16.09px;color:#000;transform:scaleX(0.9147);">User variables for JamesMoore</div>
<div class="a" style="left:542.4px;top:267.3px;width:648px;height:262.7px;background:#fff;border:1px solid #828790"></div>
<div class="a" style="left:736px;top:269px;width:1px;height:26px;background:#e5e5e5"></div>
<div class="a" style="left:1166px;top:269px;width:1px;height:26px;background:#ececec"></div>
<div class="t" style="left:550.38px;top:275.45px;font-size:15.22px;color:#000;transform:scaleX(0.9751);">Variable</div>
<div class="t" style="left:743.62px;top:275.45px;font-size:15.22px;color:#000;transform:scaleX(0.9507);">Value</div>
<div class="a" style="left:548px;top:295.2px;width:619px;height:23.4px;background:#efefef"></div>
<div class="t" style="left:549.38px;top:299.71px;font-size:15.22px;color:#000;transform:scaleX(0.9750);">OneDrive</div>
<div class="t" style="left:742.12px;top:300.25px;font-size:15.22px;color:#000;transform:scaleX(0.9342);">C:\Users</div>
<div class="t" style="left:893.44px;top:299.71px;font-size:15.22px;color:#000;transform:scaleX(0.9440);">OneDrive</div>
<div class="t" style="left:549.38px;top:323.45px;font-size:15.20px;color:#000;transform:scaleX(1.0000);">Path</div>
<div class="t" style="left:742.12px;top:323.43px;font-size:15.22px;color:#000;transform:scaleX(0.9342);">C:\Users</div>
<div class="t" style="left:894.44px;top:323.77px;font-size:15.22px;color:#000;transform:scaleX(0.9999);">AppData\Local\Microsoft\WindowsAp...</div>
<svg class="a" style="left:792px;top:299px" width="104" height="20"><rect x="3.2" y="0" width="5.05" height="4.9" fill="#dcdcdc"/><rect x="8.2" y="0" width="5.05" height="4.9" fill="#f0e8e0"/><rect x="13.2" y="0" width="5.05" height="4.9" fill="#d8dce4"/><rect x="48.2" y="0" width="5.05" height="4.9" fill="#dcd4cc"/><rect x="53.2" y="0" width="5.05" height="4.9" fill="#e4e8ec"/><rect x="58.2" y="0" width="5.05" height="4.9" fill="#d0d0d0"/><rect x="93.2" y="0" width="5.05" height="4.9" fill="#dcdcdc"/><rect x="98.2" y="0" width="5.05" height="4.9" fill="#ece8e4"/><rect x="0.0" y="4.8" width="3.20" height="5" fill="#9aa0a8"/><rect x="3.2" y="4.8" width="5.05" height="5" fill="#b0b4b8"/><rect x="8.2" y="4.8" width="5.05" height="5" fill="#f4e4d0"/><rect x="13.2" y="4.8" width="5.05" height="5" fill="#a0a4b0"/><rect x="18.2" y="4.8" width="5.05" height="5" fill="#8c949c"/><rect x="23.2" y="4.8" width="5.05" height="5" fill="#a8a8a0"/><rect x="28.2" y="4.8" width="5.05" height="5" fill="#a0a0a0"/><rect x="33.2" y="4.8" width="5.05" height="5" fill="#a8a0a0"/><rect x="38.2" y="4.8" width="5.05" height="5" fill="#787878"/><rect x="43.2" y="4.8" width="5.05" height="5" fill="#a0a4a8"/><rect x="48.2" y="4.8" width="5.05" height="5" fill="#a8a8a0"/><rect x="53.2" y="4.8" width="5.05" height="5" fill="#b0acac"/><rect x="58.2" y="4.8" width="5.05" height="5" fill="#808890"/><rect x="63.2" y="4.8" width="5.05" height="5" fill="#b0acac"/><rect x="68.2" y="4.8" width="5.05" height="5" fill="#b8b8b4"/><rect x="73.2" y="4.8" width="5.05" height="5" fill="#a8a8a8"/><rect x="78.2" y="4.8" width="5.05" height="5" fill="#b0a49c"/><rect x="83.2" y="4.8" width="5.05" height="5" fill="#a8a8ac"/><rect x="88.2" y="4.8" width="5.05" height="5" fill="#787878"/><rect x="93.2" y="4.8" width="5.05" height="5" fill="#a8b0b8"/><rect x="98.2" y="4.8" width="5.05" height="5" fill="#b0b0b8"/><rect x="0.0" y="9.7" width="3.20" height="5" fill="#9a8c88"/><rect x="3.2" y="9.7" width="5.05" height="5" fill="#d4d4d4"/><rect x="8.2" y="9.7" width="5.05" height="5" fill="#a8a8a8"/><rect x="13.2" y="9.7" width="5.05" height="5" fill="#a0a4b0"/><rect x="18.2" y="9.7" width="5.05" height="5" fill="#a0a8ac"/><rect x="23.2" y="9.7" width="5.05" height="5" fill="#d0d0cc"/><rect x="28.2" y="9.7" width="5.05" height="5" fill="#d0ccd0"/><rect x="33.2" y="9.7" width="5.05" height="5" fill="#b0a8a8"/><rect x="38.2" y="9.7" width="5.05" height="5" fill="#b0b8bc"/><rect x="43.2" y="9.7" width="5.05" height="5" fill="#d4ccbc"/><rect x="48.2" y="9.7" width="5.05" height="5" fill="#a0a4a8"/><rect x="53.2" y="9.7" width="5.05" height="5" fill="#b8b0b0"/><rect x="58.2" y="9.7" width="5.05" height="5" fill="#c0c8cc"/><rect x="63.2" y="9.7" width="5.05" height="5" fill="#b4acac"/><rect x="68.2" y="9.7" width="5.05" height="5" fill="#b8b8b4"/><rect x="73.2" y="9.7" width="5.05" height="5" fill="#a8a8a8"/><rect x="78.2" y="9.7" width="5.05" height="5" fill="#b8aca0"/><rect x="83.2" y="9.7" width="5.05" height="5" fill="#c8ccd8"/><rect x="88.2" y="9.7" width="5.05" height="5" fill="#a8b0b4"/><rect x="93.2" y="9.7" width="5.05" height="5" fill="#e8dcd0"/><rect x="98.2" y="9.7" width="5.05" height="5" fill="#a8b0b8"/><rect x="8.2" y="14.7" width="5" height="4" fill="#e6e6e6"/><rect x="98.2" y="14.7" width="5" height="4" fill="#e6e6e6"/></svg>
<svg class="a" style="left:792px;top:323px" width="104" height="20"><rect x="3.2" y="0" width="5.05" height="4.9" fill="#dcdcdc"/><rect x="8.2" y="0" width="5.05" height="4.9" fill="#f0e8e0"/><rect x="13.2" y="0" width="5.05" height="4.9" fill="#d8dce4"/><rect x="48.2" y="0" width="5.05" height="4.9" fill="#dcd4cc"/><rect x="53.2" y="0" width="5.05" height="4.9" fill="#e4e8ec"/><rect x="58.2" y="0" width="5.05" height="4.9" fill="#d0d0d0"/><rect x="93.2" y="0" width="5.05" height="4.9" fill="#dcdcdc"/><rect x="98.2" y="0" width="5.05" height="4.9" fill="#ece8e4"/><rect x="0.0" y="4.8" width="3.20" height="5" fill="#9aa0a8"/><rect x="3.2" y="4.8" width="5.05" height="5" fill="#b0b4b8"/><rect x="8.2" y="4.8" width="5.05" height="5" fill="#f4e4d0"/><rect x="13.2" y="4.8" width="5.05" height="5" fill="#a0a4b0"/><rect x="18.2" y="4.8" width="5.05" height="5" fill="#8c949c"/><rect x="23.2" y="4.8" width="5.05" height="5" fill="#a8a8a0"/><rect x="28.2" y="4.8" width="5.05" height="5" fill="#a0a0a0"/><rect x="33.2" y="4.8" width="5.05" height="5" fill="#a8a0a0"/><rect x="38.2" y="4.8" width="5.05" height="5" fill="#787878"/><rect x="43.2" y="4.8" width="5.05" height="5" fill="#a0a4a8"/><rect x="48.2" y="4.8" width="5.05" height="5" fill="#a8a8a0"/><rect x="53.2" y="4.8" width="5.05" height="5" fill="#b0acac"/><rect x="58.2" y="4.8" width="5.05" height="5" fill="#808890"/><rect x="63.2" y="4.8" width="5.05" height="5" fill="#b0acac"/><rect x="68.2" y="4.8" width="5.05" height="5" fill="#b8b8b4"/><rect x="73.2" y="4.8" width="5.05" height="5" fill="#a8a8a8"/><rect x="78.2" y="4.8" width="5.05" height="5" fill="#b0a49c"/><rect x="83.2" y="4.8" width="5.05" height="5" fill="#a8a8ac"/><rect x="88.2" y="4.8" width="5.05" height="5" fill="#787878"/><rect x="93.2" y="4.8" width="5.05" height="5" fill="#a8b0b8"/><rect x="98.2" y="4.8" width="5.05" height="5" fill="#b0b0b8"/><rect x="0.0" y="9.7" width="3.20" height="5" fill="#9a8c88"/><rect x="3.2" y="9.7" width="5.05" height="5" fill="#d4d4d4"/><rect x="8.2" y="9.7" width="5.05" height="5" fill="#a8a8a8"/><rect x="13.2" y="9.7" width="5.05" height="5" fill="#a0a4b0"/><rect x="18.2" y="9.7" width="5.05" height="5" fill="#a0a8ac"/><rect x="23.2" y="9.7" width="5.05" height="5" fill="#d0d0cc"/><rect x="28.2" y="9.7" width="5.05" height="5" fill="#d0ccd0"/><rect x="33.2" y="9.7" width="5.05" height="5" fill="#b0a8a8"/><rect x="38.2" y="9.7" width="5.05" height="5" fill="#b0b8bc"/><rect x="43.2" y="9.7" width="5.05" height="5" fill="#d4ccbc"/><rect x="48.2" y="9.7" width="5.05" height="5" fill="#a0a4a8"/><rect x="53.2" y="9.7" width="5.05" height="5" fill="#b8b0b0"/><rect x="58.2" y="9.7" width="5.05" height="5" fill="#c0c8cc"/><rect x="63.2" y="9.7" width="5.05" height="5" fill="#b4acac"/><rect x="68.2" y="9.7" width="5.05" height="5" fill="#b8b8b4"/><rect x="73.2" y="9.7" width="5.05" height="5" fill="#a8a8a8"/><rect x="78.2" y="9.7" width="5.05" height="5" fill="#b8aca0"/><rect x="83.2" y="9.7" width="5.05" height="5" fill="#c8ccd8"/><rect x="88.2" y="9.7" width="5.05" height="5" fill="#a8b0b4"/><rect x="93.2" y="9.7" width="5.05" height="5" fill="#e8dcd0"/><rect x="98.2" y="9.7" width="5.05" height="5" fill="#a8b0b8"/><rect x="8.2" y="14.7" width="5" height="4" fill="#e6e6e6"/><rect x="98.2" y="14.7" width="5" height="4" fill="#e6e6e6"/></svg>
<div class="a" style="left:514px;top:552px;width:704px;height:58px;background:linear-gradient(#d6d6d6,rgba(240,240,240,0))"></div>
<div class="a" style="left:528.3px;top:568px;width:675.7px;height:300.5px;border:1px solid #dcdcdc"></div>
<div class="a" style="left:535px;top:561px;width:115px;height:15px;background:#ebebeb"></div>
<div class="t" style="left:536.56px;top:560.74px;font-size:15.94px;color:#000;transform:scaleX(0.9140);">System variables</div>
<div class="a" style="left:542.2px;top:589px;width:647.2px;height:207px;background:#fff;border:1px solid #828790"></div>
<div class="a" style="left:543.7px;top:590.6px;width:622.8px;height:25.4px;background:linear-gradient(#e9e9e9,#f7f7f7)"></div>
<div class="a" style="left:736px;top:591px;width:1px;height:25px;background:#dcdcdc"></div>
<div class="a" style="left:1167px;top:590.6px;width:21.4px;height:204.4px;background:#f0f0f0"></div>
<div class="a" style="left:1175px;top:611.7px;width:6.3px;height:53.9px;background:#858585;border-radius:2px"></div>
<div class="t" style="left:550.44px;top:596.71px;font-size:15.22px;color:#000;transform:scaleX(0.9783);">Variable</div>
<div class="t" style="left:743.62px;top:596.71px;font-size:15.22px;color:#000;transform:scaleX(0.9507);">Value</div>
<div class="a" style="left:547.7px;top:617.2px;width:618.8px;height:23.6px;background:#e8e8e8"></div>
<div class="t" style="left:549.44px;top:621.54px;font-size:15.22px;color:#000;transform:scaleX(0.8709);">CHASSIS</div>
<div class="t" style="left:742.62px;top:621.95px;font-size:15.22px;color:#000;transform:scaleX(1.0368);">Notebook</div>
<div class="t" style="left:549.44px;top:645.29px;font-size:15.22px;color:#000;transform:scaleX(0.9530);">ComSpec</div>
<div class="t" style="left:742.62px;top:646.19px;font-size:15.22px;color:#000;transform:scaleX(0.9630);">C:\WINDOWS\system32\cmd.exe</div>
<div class="t" style="left:549.44px;top:669.77px;font-size:15.22px;color:#000;transform:scaleX(0.9806);">DriverData</div>
<div class="t" style="left:742.62px;top:670.26px;font-size:15.22px;color:#000;transform:scaleX(0.9819);">C:\Windows\System32\Drivers\DriverData</div>
<div class="t" style="left:549.44px;top:693.74px;font-size:15.22px;color:#000;transform:scaleX(0.9246);">MODEL</div>
<div class="t" style="left:742.62px;top:693.74px;font-size:15.22px;color:#000;transform:scaleX(0.9719);">3540</div>
<div class="t" style="left:549.44px;top:717.80px;font-size:15.22px;color:#000;transform:scaleX(0.9343);">NINJARMMCLI</div>
<div class="t" style="left:742.62px;top:717.89px;font-size:15.22px;color:#000;transform:scaleX(1.0000);">C:\ProgramData\NinjaRMMAgent\ninjarmm-cli.exe</div>
<div class="t" style="left:549.44px;top:741.41px;font-size:15.22px;color:#000;transform:scaleX(0.8467);">NUMBER_OF_PROCESSORS</div>
<div class="t" style="left:742.62px;top:741.73px;font-size:15.22px;color:#000;transform:scaleX(0.9981);">12</div>
<div class="t" style="left:549.44px;top:765.73px;font-size:15.22px;color:#000;transform:scaleX(0.8650);">OS</div>
<div class="t" style="left:743.62px;top:766.37px;font-size:15.22px;color:#000;transform:scaleX(0.9439);">Windows_NT</div>
<div class="clip" style="left:543px;top:786px;width:623px;height:9px">
<div class="t" style="left:6.56px;top:3.77px;font-size:15.20px;color:#000;transform:scaleX(1.0000);">Path</div>
<div class="t" style="left:199.44px;top:3.39px;font-size:15.22px;color:#000;transform:scaleX(0.8370);">C:\WINDOWS\system32;C:\WINDOWS;C:\WINDOWS\System32\Wbem</div>
</div>
<div class="a" style="left:875.4px;top:815.2px;width:97.4px;height:32.3px;background:#fbfbfb;border:1px solid #d0d0d0;border-bottom-color:#c0c0c0;border-radius:4px"></div>
<div class="t" style="left:903.56px;top:823.48px;font-size:17.10px;color:#000;transform:scaleX(0.8342);">New...</div>
<div class="a" style="left:983.5px;top:815.2px;width:97.3px;height:32.3px;background:#fbfbfb;border:1px solid #d0d0d0;border-bottom-color:#c0c0c0;border-radius:4px"></div>
<div class="t" style="left:1013.56px;top:823.17px;font-size:17.10px;color:#000;transform:scaleX(0.8212);">Edit...</div>
<div class="a" style="left:1091.5px;top:815.2px;width:97.1px;height:32.3px;background:#fbfbfb;border:1px solid #d0d0d0;border-bottom-color:#c0c0c0;border-radius:4px"></div>
<div class="t" style="left:1117.38px;top:823.17px;font-size:17.10px;color:#000;transform:scaleX(0.8923);">Delete</div>
<div class="a" style="left:977.3px;top:890.4px;width:97.3px;height:32.3px;background:#fbfbfb;border:1px solid #d0d0d0;border-bottom-color:#c0c0c0;border-radius:4px"></div>
<div class="t" style="left:1015.62px;top:899.68px;font-size:16.96px;color:#000;transform:scaleX(0.8633);">OK</div>
<div class="a" style="left:1085.3px;top:890.4px;width:97.4px;height:32.3px;background:#fbfbfb;border:1px solid #d0d0d0;border-bottom-color:#c0c0c0;border-radius:4px"></div>
<div class="t" style="left:1111.00px;top:899.10px;font-size:16.96px;color:#000;transform:scaleX(0.8634);">Cancel</div>
<div class="a" style="left:1212px;top:929px;width:3px;height:3px;background:#a6a6a6"></div>
<div class="a" style="left:1208px;top:933px;width:3px;height:3px;background:#a6a6a6"></div>
<div class="a" style="left:1212px;top:933px;width:3px;height:3px;background:#a6a6a6"></div>
<div class="a" style="left:1204px;top:937px;width:3px;height:3px;background:#a6a6a6"></div>
<div class="a" style="left:1208px;top:937px;width:3px;height:3px;background:#a6a6a6"></div>
<div class="a" style="left:1212px;top:937px;width:3px;height:3px;background:#a6a6a6"></div>
</div></div>
<div class="clip" style="left:517px;top:337px;width:745px;height:215px;border-radius:8px;background:#f0f0f0;box-shadow:0 8px 20px rgba(0,0,0,.25);border:1px solid #c4c4c4">
<div class="a" style="left:-518px;top:-338px;width:1301px;height:951px">
<div class="a" style="left:517px;top:337px;width:745px;height:37px;background:#f3f3f3"></div>
<div class="t" style="left:526.50px;top:347.44px;font-size:16.38px;color:#8c8c8c;transform:scaleX(0.8910);">New System Variable</div>
<svg class="a" style="left:1234px;top:348px" width="14" height="14" viewBox="0 0 14 14"><path d="M1 1 L13 13 M13 1 L1 13" stroke="#858585" stroke-width="1.1"/></svg>
<div class="t" style="left:532.56px;top:412.33px;font-size:16.81px;color:#000;transform:scaleX(0.8779);">Variable name:</div>
<div class="t" style="left:532.56px;top:456.55px;font-size:16.38px;color:#000;transform:scaleX(0.9018);">Variable value:</div>
<div class="a" style="left:668.7px;top:405px;width:576.1px;height:29px;background:#fff;border-bottom:1px solid #8a8a8a"></div>
<div class="a" style="left:668.7px;top:450.2px;width:576.1px;height:29.3px;background:#fff;border-bottom:1px solid #8a8a8a"></div>
<div class="t" style="left:673.44px;top:411.25px;font-size:17.10px;color:#1a1a1a;transform:scaleX(0.8655);">NC_PROXY</div>
<div class="t" style="left:669.00px;top:454.08px;font-size:18.84px;color:#1a1a1a;transform:scaleX(0.8991);">192.168.1.1:1080:proxyuser:proxyPassword</div>
<div class="a" style="left:533.4px;top:500.3px;width:147.2px;height:32px;background:#fbfbfb;border:1px solid #d0d0d0;border-bottom-color:#c0c0c0;border-radius:4px"></div>
<div class="t" style="left:545.56px;top:509.41px;font-size:16.81px;color:#000;transform:scaleX(0.8744);">Browse Directory...</div>
<div class="a" style="left:691.6px;top:500.3px;width:146.9px;height:32px;background:#fbfbfb;border:1px solid #d0d0d0;border-bottom-color:#c0c0c0;border-radius:4px"></div>
<div class="t" style="left:722.56px;top:509.39px;font-size:16.81px;color:#000;transform:scaleX(0.8368);">Browse File...</div>
<div class="a" style="left:1039.8px;top:500.5px;width:96.5px;height:31.9px;background:#f5f5f5;border:1px solid #e5e5e5;border-bottom-color:#e5e5e5;border-radius:4px"></div>
<div class="t" style="left:1077.00px;top:509.16px;font-size:17.25px;color:#9d9d9d;transform:scaleX(0.8448);">OK</div>
<div class="a" style="left:1147.3px;top:500.5px;width:97.2px;height:31.9px;background:#fbfbfb;border:1px solid #d0d0d0;border-bottom-color:#c0c0c0;border-radius:4px"></div>
<div class="t" style="left:1173.56px;top:508.55px;font-size:17.25px;color:#000;transform:scaleX(0.8395);">Cancel</div>
<div class="a" style="left:1256px;top:539px;width:3px;height:3px;background:#a6a6a6"></div>
<div class="a" style="left:1252px;top:543px;width:3px;height:3px;background:#a6a6a6"></div>
<div class="a" style="left:1256px;top:543px;width:3px;height:3px;background:#a6a6a6"></div>
<div class="a" style="left:1248px;top:547px;width:3px;height:3px;background:#a6a6a6"></div>
<div class="a" style="left:1252px;top:547px;width:3px;height:3px;background:#a6a6a6"></div>
<div class="a" style="left:1256px;top:547px;width:3px;height:3px;background:#a6a6a6"></div>
</div></div>
<div class="a" style="left:19px;top:190px;width:206px;height:49px;border:4px solid #f00"></div>
<div class="a" style="left:411px;top:20px;width:280px;height:51px;border:4px solid #f00"></div>
<div class="a" style="left:923px;top:133px;width:216px;height:45.5px;border:4px solid #f00"></div>
<div class="a" style="left:341.4px;top:695.2px;width:176px;height:39.5px;border:4px solid #f00"></div>
<div class="a" style="left:529.1px;top:553.3px;width:130.6px;height:30.5px;border:4px solid #f00"></div>
<div class="a" style="left:870.4px;top:809px;width:110.2px;height:46.3px;border:4px solid #f00"></div>
<!--ENV-->
</body></html>
